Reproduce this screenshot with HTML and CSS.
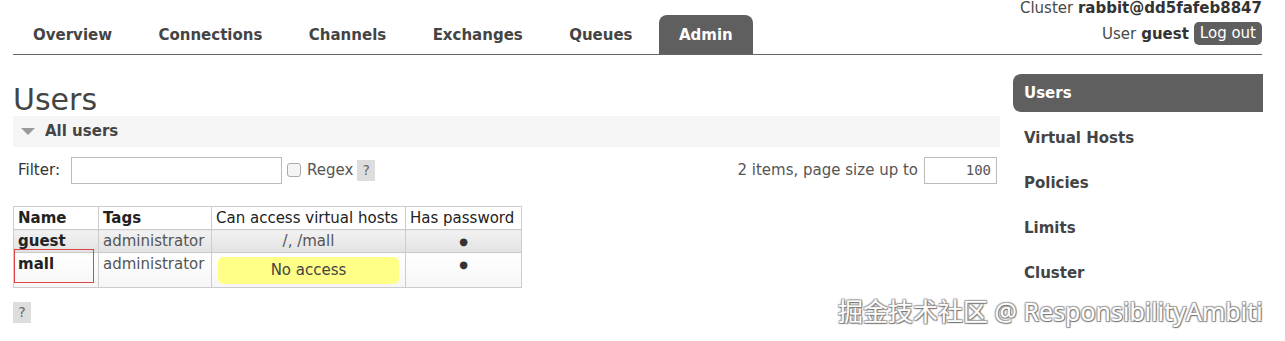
FILE: index.html
```html
<!DOCTYPE html>
<html>
<head>
<meta charset="utf-8">
<link rel="stylesheet" href="styles.css">
</head>
<body>
<div class="header">
  <ul class="tabs">
    <li class="tab">Overview</li>
    <li class="tab">Connections</li>
    <li class="tab">Channels</li>
    <li class="tab">Exchanges</li>
    <li class="tab">Queues</li>
    <li class="tab active">Admin</li>
  </ul>
  <div class="status">
    <div class="cluster">Cluster <b>rabbit@dd5fafeb8847</b></div>
    <div class="user">User <b>guest</b> <span class="logout">Log out</span></div>
  </div>
</div>
<div class="main">
  <div class="content">
    <h1 class="title">Users</h1>
    <div class="section-head"><span class="tri"></span>All users</div>
    <div class="filter-row">
      <div class="filter-left">
        <span class="lbl">Filter:</span>
        <span class="input wide"></span>
        <span class="check"></span>
        <span class="regex">Regex</span>
        <span class="help">?</span>
      </div>
      <div class="filter-right">
        <span>2 items, page size up to</span>
        <span class="input small">100</span>
      </div>
    </div>
    <table class="users">
      <tr class="hdr">
        <th class="c1 b">Name</th>
        <th class="c2 b">Tags</th>
        <th class="c3">Can access virtual hosts</th>
        <th class="c4">Has password</th>
      </tr>
      <tr class="odd">
        <td class="b">guest</td>
        <td>administrator</td>
        <td class="center">/, /mall</td>
        <td class="center dot">&#9679;</td>
      </tr>
      <tr class="even">
        <td class="b name-mall">mall<span class="mark"></span></td>
        <td>administrator</td>
        <td class="center"><div class="noaccess">No access</div></td>
        <td class="center dot">&#9679;</td>
      </tr>
    </table>
    <div class="help bottom">?</div>
  </div>
  <ul class="side">
    <li class="active">Users</li>
    <li>Virtual Hosts</li>
    <li>Policies</li>
    <li>Limits</li>
    <li>Cluster</li>
  </ul>
</div>
<div class="watermark">掘金技术社区 @ ResponsibilityAmbiti</div>
</body>
</html>
```
FILE: styles.css
```css
html, body {
  margin: 0;
  padding: 0;
  overflow: hidden;
}
body {
  font-family: "DejaVu Sans", Verdana, sans-serif;
  font-size: 15px;
  color: #484848;
  background: #fff;
  width: 1285px;
  height: 341px;
  position: relative;
}
.header {
  display: flex;
  justify-content: space-between;
  align-items: flex-end;
  margin: 0 23px 0 13px;
  border-bottom: 1px solid #666;
  height: 54px;
}
.tabs {
  list-style: none;
  margin: 0;
  padding: 0;
  display: flex;
  gap: 6.4px;
}
.tab {
  padding: 0 20px;
  height: 39px;
  line-height: 40px;
  font-weight: bold;
  font-size: 15px;
  color: #444;
  border-radius: 8px 8px 0 0;
}
.tab.active {
  background: #5f5f5f;
  color: #fff;
}
.status {
  align-self: flex-start;
  text-align: right;
  font-size: 15px;
  color: #484848;
}
.status b { color: #333; }
.cluster { line-height: 16px; }
.user {
  margin-top: 6px;
  display: flex;
  align-items: center;
  justify-content: flex-end;
  gap: 5px;
}
.logout {
  background: #5f5f5f;
  color: #fff;
  border-radius: 5px;
  padding: 0 6px;
  height: 23px;
  line-height: 23px;
  font-size: 15px;
}
.main {
  display: flex;
  margin: 0 22px 0 13px;
  gap: 13px;
}
.content {
  width: 987px;
}
.title {
  font-weight: normal;
  font-size: 30px;
  color: #444;
  margin: 26px 0 0;
  line-height: 38px;
  height: 35px;
}
.section-head {
  background: #f5f5f5;
  height: 31px;
  line-height: 31px;
  font-weight: bold;
  font-size: 15px;
  color: #444;
  display: flex;
  align-items: center;
}
.tri {
  width: 0;
  height: 0;
  border-left: 7px solid transparent;
  border-right: 7px solid transparent;
  border-top: 7px solid #999;
  margin: 0 10px 0 8px;
}
.filter-row {
  display: flex;
  justify-content: space-between;
  align-items: center;
  margin-top: 9px;
  height: 28px;
}
.filter-left, .filter-right {
  display: flex;
  align-items: center;
}
.lbl { margin-left: 5px; color: #333; }
.input {
  display: inline-block;
  border: 1px solid #bbb;
  box-sizing: border-box;
  height: 27px;
}
.input.wide { width: 211px; margin-left: 11px; }
.check {
  width: 12px;
  height: 12px;
  border: 1px solid #aaa;
  border-radius: 3px;
  margin-left: 5px;
  background: #f4f4f4;
}
.regex { margin-left: 6px; color: #555; }
.help {
  display: inline-block;
  background: #ddd;
  color: #666;
  width: 18px;
  height: 21px;
  line-height: 21px;
  text-align: center;
  margin-left: 4px;
  font-size: 14px;
}
.filter-right { margin-right: 3px; color: #555; }
.input.small {
  width: 73px;
  margin-left: 6px;
  text-align: right;
  padding-right: 5px;
  line-height: 25px;
  font-family: "DejaVu Sans Mono", monospace;
  font-size: 14px;
  color: #555;
}
.users {
  border-collapse: collapse;
  margin-top: 22px;
  font-size: 15px;
}
.users th, .users td {
  border: 1px solid #ccc;
  padding: 1px 4px 0;
  text-align: left;
  vertical-align: top;
  height: 20px;
  line-height: 21px;
}
.users th { font-weight: normal; color: #222; background: #fff; }
.users .b { font-weight: bold; color: #222; }
.users td { color: #555; }
.users .center { text-align: center; }
.c1 { width: 76px; }
.c2 { width: 104px; }
.c3 { width: 185px; }
.c4 { width: 107px; }
.odd td {
  background: linear-gradient(#f2f2f2, #e2e2e2);
}
.even td {
  background: linear-gradient(#fff, #f6f6f6);
  height: 33px;
}
.users td.dot { font-size: 10px; color: #333; }
.name-mall { position: relative; }
.mark {
  position: absolute;
  left: 0;
  top: -4px;
  width: 78px;
  height: 32px;
  border: 1px solid #d44;
}
.noaccess {
  background: #ffff88;
  border-radius: 5px;
  margin: 3px 2px 2px;
  height: 27px;
  line-height: 27px;
  color: #444;
}
.help.bottom {
  display: block;
  margin: 14px 0 0;
}
.side {
  list-style: none;
  margin: 19px 0 0;
  padding: 0;
  width: 250px;
}
.side li {
  height: 38px;
  line-height: 38px;
  margin-bottom: 7px;
  padding-left: 11px;
  font-weight: bold;
  font-size: 15px;
  color: #444;
}
.side li.active {
  background: #5f5f5f;
  color: #fff;
  border-radius: 8px 0 0 8px;
}
.watermark {
  position: absolute;
  left: 838px;
  top: 292px;
  white-space: nowrap;
  font-family: "Noto Sans", "Noto Sans CJK SC", sans-serif;
  font-size: 25px;
  color: #fff;
  text-shadow: 1px 1px 1px #777, -1px -1px 1px #aaa, 1px -1px 1px #999, -1px 1px 1px #999;
}
```
